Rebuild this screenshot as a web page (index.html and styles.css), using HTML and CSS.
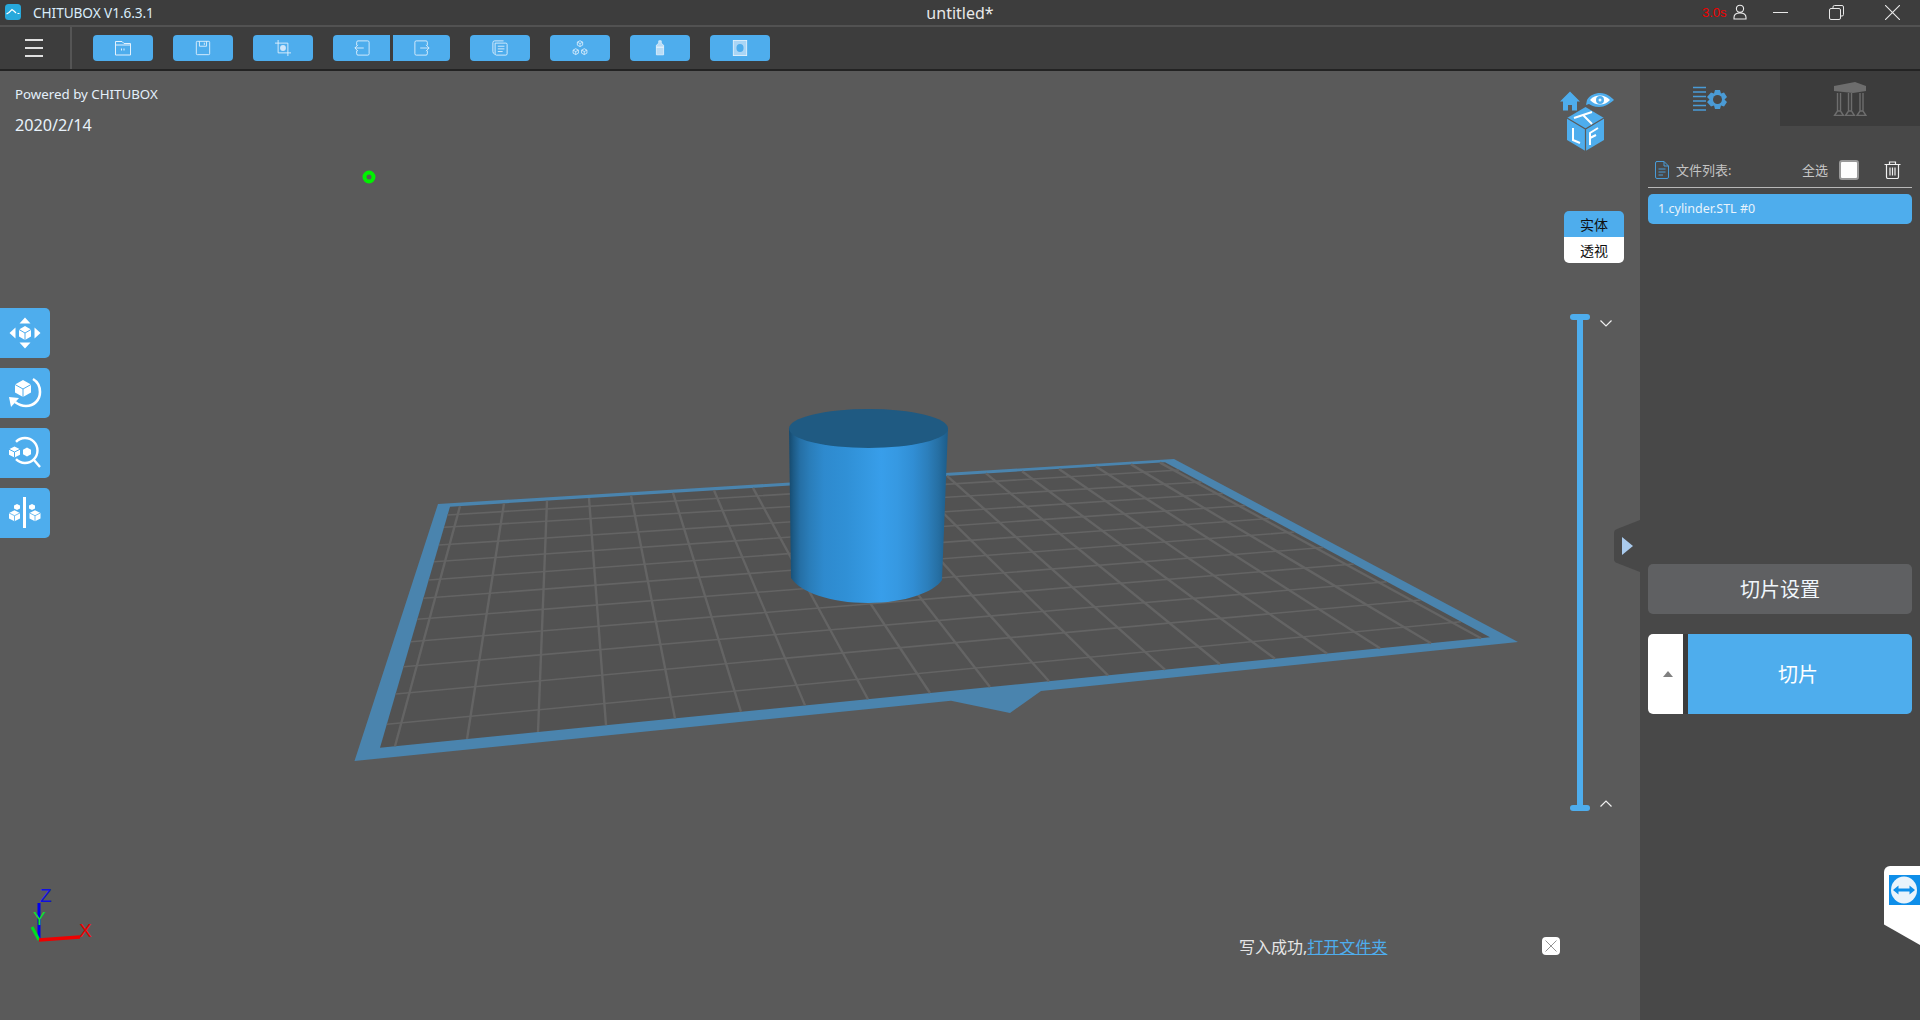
FILE: index.html
```html
<!DOCTYPE html>
<html lang="zh">
<head>
<meta charset="utf-8">
<title>CHITUBOX</title>
<link rel="stylesheet" href="styles.css">
</head>
<body>
<div class="app">
  <header class="titlebar">
    <div class="title-left">
      <svg class="logo" viewBox="0 0 16 16"><rect width="16" height="16" rx="3.5" fill="#27a9dc"/><path d="M1.5 10 L4 8.5 L7 5.5 L9.5 7.5 L11 9 M12.5 9.5 L14.5 9.5" fill="none" stroke="#fff" stroke-width="1.2"/></svg>
      <span class="app-name">CHITUBOX V1.6.3.1</span>
    </div>
    <div class="doc-name">untitled*</div>
    <div class="title-right">
      <span class="timer">3.0s</span>
      <svg class="user" viewBox="0 0 14 16"><circle cx="7" cy="4.8" r="3.6" fill="none" stroke="#eee" stroke-width="1.1"/><path d="M1 15 V13.5 C1 10.5 3.5 9 7 9 C10.5 9 13 10.5 13 13.5 V15 Z" fill="none" stroke="#eee" stroke-width="1.1"/></svg>
      <svg class="min" viewBox="0 0 15 15"><path d="M0 7.5H15" stroke="#e8e8e8" stroke-width="1"/></svg>
      <svg class="restore" viewBox="0 0 15 15"><path d="M4 3 V2 Q4 .5 5.5 .5 H13 Q14.5 .5 14.5 2 V9.5 Q14.5 11 13 11 H12" fill="none" stroke="#e8e8e8"/><rect x=".5" y="3.5" width="11" height="11" rx="1.5" fill="none" stroke="#e8e8e8"/></svg>
      <svg class="close" viewBox="0 0 15 15"><path d="M0 0L15 15M15 0L0 15" stroke="#e8e8e8" stroke-width="1.1"/></svg>
    </div>
  </header>

  <nav class="toolbar">
    <div class="menu"><i></i><i></i><i></i></div>
    <div class="tools">
      <button class="tool"><svg viewBox="0 0 18 16"><path d="M1.5 15V1.5H8L10 3.5H16.5V15ZM1.5 5H16.5M7.5 8.5V10.5M10 8.5V10.5" class="ic"/></svg></button>
      <button class="tool"><svg viewBox="0 0 18 18"><path d="M2.5 1.5H15.5Q16.5 1.5 16.5 2.5V15.5Q16.5 16.5 15.5 16.5H2.5Q1.5 16.5 1.5 15.5V2.5Q1.5 1.5 2.5 1.5ZM5 1.5V7H13V1.5M10.5 3V5.5" class="ic"/></svg></button>
      <button class="tool"><svg viewBox="0 0 18 18"><path d="M3.5 0V14.5H18M0 3.5H14.5V18" class="ic"/><circle cx="9" cy="9" r="3.3" fill="#cfe6fa"/></svg></button>
      <div class="tool-pair">
        <button class="tool half left"><svg viewBox="0 0 18 18"><path d="M3 6V2.5Q3 1 4.5 1H15.5Q17 1 17 2.5V15.5Q17 17 15.5 17H4.5Q3 17 3 15.5V12M1 9H11M1 9L4.5 5.5M1 9L4.5 12.5" class="ic"/></svg></button>
        <button class="tool half right"><svg viewBox="0 0 18 18"><path d="M15 6V2.5Q15 1 13.5 1H2.5Q1 1 1 2.5V15.5Q1 17 2.5 17H13.5Q15 17 15 15.5V12M7 9H17M17 9L13.5 5.5M17 9L13.5 12.5" class="ic"/></svg></button>
      </div>
      <button class="tool"><svg viewBox="0 0 18 18"><path d="M3 16Q1 15 1 13V3Q1 1 3 1H13M3.5 3.5H15.5Q17 3.5 17 5V15.5Q17 17 15.5 17H5Q3.5 17 3.5 15.5ZM6.5 7H14M6.5 10H14M6.5 13H12" class="ic"/></svg></button>
      <button class="tool"><svg viewBox="0 0 18 18"><path d="M9 .8L12 2.4V5.8L9 7.4L6 5.8V2.4ZM6 2.4L9 4L12 2.4M9 4V7.4M4.2 9.8L7.2 11.4V14.8L4.2 16.4L1.2 14.8V11.4ZM1.2 11.4L4.2 13L7.2 11.4M4.2 13V16.4M13.8 9.8L16.8 11.4V14.8L13.8 16.4L10.8 14.8V11.4ZM10.8 11.4L13.8 13L16.8 11.4M13.8 13V16.4" class="ic thin"/></svg></button>
      <button class="tool"><svg viewBox="0 0 12 20"><path d="M4.5 1H7.5V4L10.5 6.5V18.5H1.5V6.5L4.5 4Z" fill="#b9dcf6" stroke="#e6f3fc" stroke-width="1"/><path d="M1.5 9H10.5" stroke="#fff" stroke-width="1"/></svg></button>
      <button class="tool"><svg viewBox="0 0 16 18"><rect x=".5" y=".5" width="15" height="17" fill="#a9d5f5" stroke="#e3f1fb"/><ellipse cx="8" cy="9" rx="4" ry="4.4" fill="#4eaded"/></svg></button>
    </div>
  </nav>

  <div class="workspace">
    <main class="viewport">
      <svg class="scene" viewBox="0 0 1640 949" preserveAspectRatio="none" aria-hidden="true">
        <defs>
          <linearGradient id="cyl" x1="0" x2="1" y1="0" y2="0">
            <stop offset="0" stop-color="#164a6e"/>
            <stop offset=".03" stop-color="#1d5c88"/>
            <stop offset=".07" stop-color="#256fa5"/>
            <stop offset=".13" stop-color="#2a7db9"/>
            <stop offset=".22" stop-color="#2e8ace"/>
            <stop offset=".36" stop-color="#3090d6"/>
            <stop offset=".5" stop-color="#3599e2"/>
            <stop offset=".58" stop-color="#389eea"/>
            <stop offset=".68" stop-color="#3699e2"/>
            <stop offset=".78" stop-color="#318ed4"/>
            <stop offset=".87" stop-color="#2c7fbc"/>
            <stop offset=".94" stop-color="#266fa3"/>
            <stop offset="1" stop-color="#1c5c89"/>
          </linearGradient>
        </defs>
        <g transform="translate(0 -71)">
          <path class="plate-rim" d="M438 504L1174 459L1518 642L1041 691L1010 713L951 700.7L354.5 761Z"/>
          <path class="plate" d="M450 506.7L1165 462.3L1490 637.3L380 747.7Z"/>
          <path class="grid-h" d="M447.6 515L1179.3 470M444 527.3L1201.6 482M438.9 545L1223 493.5M434 561.7L1245 505.5M428.7 580L1269.4 518.5M423.4 598.3L1294.4 532M417.3 619.3L1323.2 547.5M410.8 641.7L1353.9 564M403.5 666.7L1386.8 581.7M395.6 694L1420.7 600M386.8 724.3L1461 621.7"/>
          <path class="grid-v" d="M460 506.1L395 746.2M504 503.4L467 739M547 500.7L538 732M589 498L606 725.2M631 495.5L675 718.4M673 492.9L741 711.8M714 490.3L805 705.4M753 487.9L868 699.2M792 485.5L930 693M831 483L990 687M869 480.7L1049 681.2M908 478.3L1108 675.3M947 475.8L1165 669.6M986 473.4L1220 664.2M1022 471.2L1275 658.7M1059 468.9L1327 653.5M1096 466.6L1380 648.2M1131 464.4L1431 643.2M1160 462.6L1481 638.2"/>
          <path class="cyl-side" d="M789 428L791 578C800 592 830 603 868 603C905 603 934 592 942 580L948 428Z"/>
          <ellipse class="cyl-top" cx="868.5" cy="428.5" rx="79.5" ry="19.5"/>
          <circle class="pivot" cx="369" cy="177" r="4.5"/>
          <g class="axes">
            <path class="ax-z" d="M39 940V903"/>
            <path class="ax-y" d="M39 940L32 927"/>
            <path class="ax-x" d="M39 940L80 937"/>
            <text class="ax-t z" x="40" y="902">Z</text>
            <text class="ax-t y" x="33" y="925">Y</text>
            <text class="ax-t x" x="79" y="937">X</text>
          </g>
        </g>
      </svg>

      <div class="info">
        <p class="powered">Powered by CHITUBOX</p>
        <p class="date">2020/2/14</p>
      </div>

      <div class="side-tools">
        <button class="side-btn"><svg viewBox="0 0 34 34"><path d="M17 1.5L22.500 7.500H11.500ZM17 32.500L22.500 26.500H11.500ZM1.500 17L7.500 11.500V22.500ZM32.500 17L26.500 11.500V22.500Z" fill="#fff"/><path d="M17 10L23 13.500V20.500L17 24L11 20.500V13.500Z" fill="#fff"/><path d="M11 13.500L17 17L23 13.500M17 17V24" stroke="#4eaded" fill="none"/></svg></button>
        <button class="side-btn"><svg viewBox="0 0 34 34"><path d="M25 3C30 6 32 11 32 16C32 24 26 30 18 30C14 30 11 29 7 26" fill="none" stroke="#fff" stroke-width="2.600"/><path d="M1 21L11 22L3 31Z" fill="#fff"/><path d="M15 4L23 8.500V16.500L15 21L7 16.500V8.500Z" fill="#fff"/><path d="M7 8.500L15 13L23 8.500M15 13V21" stroke="#4eaded" fill="none"/></svg></button>
        <button class="side-btn"><svg viewBox="0 0 34 34"><path d="M8 5.800A12.500 12.500 0 1 1 8 23.200M26 24L32 31" fill="none" stroke="#fff" stroke-width="2.400"/><path d="M6.500 10.500L12 13.250V18.750L6.500 21.500L1 18.750V13.250Z" fill="#fff"/><path d="M1 13.250L6.500 16L12 13.250M6.500 16V21.500" stroke="#4eaded" fill="none"/><path d="M19 11.500L23 13.750V18.250L19 20.500L15 18.250V13.750Z" fill="#fff"/></svg></button>
        <button class="side-btn"><svg viewBox="0 0 34 34"><rect x="15" y="1" width="3" height="31" fill="#fff"/><path d="M9 8L12 9.500V12.500L9 14L6 12.500V9.500ZM6.500 14.200L12 16.950V22.450L6.500 25.200L1 22.450V16.950ZM24 8L27 9.500V12.500L24 14L21 12.500V9.500ZM27 14.200L32.500 16.950V22.450L27 25.200L21.500 22.450V16.950Z" fill="#fff"/><path d="M1 16.950L6.500 19.700L12 16.950M6.500 19.700V25.200M21.500 16.950L27 19.700L32.500 16.950M27 19.700V25.200" stroke="#4eaded" stroke-width=".8" fill="none"/></svg></button>
      </div>

      <div class="navcube">
        <svg viewBox="0 0 60 70" aria-hidden="true">
          <path d="M11 .5L21 10.500H18V19.500H13V14H9V19.500H4V10.500H1Z" fill="#4eaded"/>
          <path d="M28 9C31 4 36 2 41 2C48 2 52 6 55 9C50 13 46 16 40 16C35 16 32 14 30 13L27 14Z" fill="#4eaded"/>
          <path d="M31 9C34 5.500 37 4.500 41 4.500C45 4.500 48 6 51 9C48 12 45 13.500 41 13.500C37 13.500 34 12 31 9Z" fill="#fff"/>
          <circle cx="41" cy="9" r="4" fill="#4eaded"/><circle cx="41" cy="9" r="1.500" fill="#e8f4fd"/>
          <path d="M26.500 16L45 27V49L26.500 60L8 49V27Z" fill="#4eaded"/>
          <path d="M8 27L26.500 38L45 27M26.500 38V60" stroke="#5a5a5a" stroke-width="1.200" fill="none"/>
          <path d="M15 27L33 21M24 24L33 33" stroke="#fff" stroke-width="2" fill="none"/>
          <path d="M14 37V49L21 52" stroke="#fff" stroke-width="2" fill="none"/>
          <path d="M31 54V42L39 37M31 47L37 44" stroke="#fff" stroke-width="2" fill="none"/>
        </svg>
      </div>

      <div class="view-mode">
        <button class="mode solid">实体</button>
        <button class="mode xray">透视</button>
      </div>

      <div class="layer-slider">
        <i class="cap"></i>
        <i class="track"></i>
        <i class="cap"></i>
        <svg class="chev up" viewBox="0 0 12 7"><path d="M.5 .5L6 6L11.500 .5" fill="none" stroke="#f0f0f0" stroke-width="1.200"/></svg>
        <svg class="chev down" viewBox="0 0 12 7"><path d="M.5 6.500L6 1L11.500 6.500" fill="none" stroke="#f0f0f0" stroke-width="1.200"/></svg>
      </div>

      <div class="notice">
        <span>写入成功,</span><a class="notice-link">打开文件夹</a>
      </div>
      <button class="notice-close"><svg viewBox="0 0 12 12"><path d="M.5 .5L11.500 11.500M11.500 .5L.5 11.500" stroke="#888" stroke-width=".9"/></svg></button>
    </main>

    <aside class="panel">
      <div class="collapse"><svg viewBox="0 0 26 52"><path d="M26 0V52L3 43Q0 42 0 39V13Q0 10 3 9Z" fill="#484848"/><path d="M8 17L19 26L8 35Z" fill="#aacbee"/></svg></div>
      <div class="tabs">
        <div class="tab active"><svg viewBox="0 0 34 26"><path d="M0 1.500H13M0 6H13M0 10.500H13M0 15H13M0 19.500H13M0 24H13" stroke="#4a9bd6" stroke-width="1.600"/><path d="M22 4H27L28 7.500L31 6.500L34 11L31.500 13.500L34 16L31 20.500L28 19.500L27 23H22L21 19.500L18 20.500L14 16L16.500 13.500L14 11L18 6.500L21 7.500Z" fill="#4a9bd6"/><circle cx="24.500" cy="13.500" r="4.500" fill="#484848"/></svg></div>
        <div class="tab"><svg viewBox="0 0 32 34"><path d="M0 4L21 0L32 4V9L19 11L0 9Z" fill="#6d6d6d"/><path d="M3.500 11V29M6.500 11V29M14.500 11V29M17.500 11V29M26 11V29M29 11V29M.5 33.500L3.500 29H6.500L9.500 33.500ZM11.500 33.500L14.500 29H17.500L20.500 33.500ZM23 33.500L26 29H29L32 33.500Z" stroke="#6d6d6d" stroke-width="1.400" fill="none"/></svg></div>
      </div>

      <div class="file-head">
        <svg class="doc" viewBox="0 0 14 18"><path d="M1.500 .5H9L13.500 5V16Q13.500 17.500 12 17.500H2Q.5 17.500 .5 16V2Q.5 .5 2 .5ZM9 .5V5H13.500M3.500 8H10.500M3.500 11H10.500M3.500 14H8" fill="none" stroke="#4a9bd6" stroke-width="1"/></svg>
        <span class="head-label">文件列表:</span>
        <span class="select-all">全选</span>
        <span class="check"></span>
        <svg class="trash" viewBox="0 0 17 18"><path d="M.5 3.500H16.500M5.500 3.500V1H11.500V3.500M2.500 3.500V16Q2.500 17.500 4 17.500H13Q14.500 17.500 14.500 16V3.500M6 6.500V14.500M8.500 6.500V14.500M11 6.500V14.500" fill="none" stroke="#f0f0f0" stroke-width="1.200"/></svg>
      </div>
      <ul class="file-list">
        <li class="file-item">1.cylinder.STL #0</li>
      </ul>

      <div class="actions">
        <button class="settings-btn">切片设置</button>
        <div class="slice-row">
          <button class="slice-more"><svg viewBox="0 0 10 6"><path d="M5 0L10 6H0Z" fill="#808080"/></svg></button>
          <button class="slice-btn">切片</button>
        </div>
      </div>

      <div class="teamviewer">
        <div class="tv-icon"><svg viewBox="0 0 31 30"><rect width="31" height="30" fill="#0e8ee9"/><ellipse cx="15" cy="15" rx="13" ry="13.500" fill="#e9f3fb"/><path d="M4 15L9.500 10.500V13.500H20.500V10.500L26 15L20.500 19.500V16.500H9.500V19.500Z" fill="#0e8ee9"/></svg></div>
      </div>
    </aside>
  </div>
</div>
</body>
</html>
```

FILE: styles.css
```css
* { box-sizing: border-box; }
html, body { margin: 0; height: 100%; overflow: hidden; }
body { font-family: "Noto Sans", "Noto Sans CJK SC", sans-serif; background: #5a5a5a; }
button { border: 0; padding: 0; margin: 0; font-family: inherit; cursor: default; }
p { margin: 0; }

.app { display: flex; flex-direction: column; height: 1020px; width: 1920px; }

/* title bar */
.titlebar { height: 27px; flex: none; display: flex; align-items: center; background: #3d3d3d; border-bottom: 2px solid #525252; position: relative; padding-bottom: 1px; }
.title-left { display: flex; align-items: center; padding-left: 5px; }
.logo { width: 16px; height: 16px; }
.app-name { margin-left: 12px; color: #d9ecfa; font-size: 13.7px; letter-spacing: -.1px; }
.doc-name { position: absolute; left: 0; right: 0; top: 1px; text-align: center; color: #e8e8e8; font-size: 16px; line-height: 24px; }
.title-right { margin-left: auto; display: flex; align-items: center; }
.timer { color: #f00000; font-family: "Liberation Sans", sans-serif; font-size: 13px; width: 31px; margin-top: 1px; }
.user { width: 14px; height: 16px; }
.min { width: 15px; height: 15px; margin-left: 26px; }
.restore { width: 15px; height: 15px; margin-left: 41px; }
.close { width: 15px; height: 15px; margin-left: 41px; margin-right: 20px; }

/* tool bar */
.toolbar { height: 44px; flex: none; display: flex; background: #3d3d3d; border-bottom: 2px solid #232323; }
.menu { width: 72px; display: flex; flex-direction: column; justify-content: center; gap: 6px; padding: 0 27px 0 25px; border-right: 2px solid #555; }
.menu i { display: block; height: 2px; background: #e0e0e0; }
.tools { display: flex; gap: 20px; padding: 8px 0 0 21px; }
.tool { width: 60px; height: 26px; border-radius: 4px; background: #4eaded; display: flex; align-items: center; justify-content: center; }
.tool svg { height: 16px; width: 18px; }
.tool-pair { display: flex; gap: 3px; }
.tool.half { width: 57px; }
.tool.left { border-radius: 4px 0 0 4px; }
.tool.right { border-radius: 0 4px 4px 0; }
.ic { fill: none; stroke: #e2f1fd; stroke-width: 1; }
.ic.thin { stroke-width: .9; }

/* workspace */
.workspace { flex: 1; display: flex; min-height: 0; }
.viewport { flex: 1; position: relative; background: #5a5a5a; overflow: hidden; }
.scene { position: absolute; inset: 0; width: 100%; height: 100%; }
.plate-rim { fill: #4a84ae; }
.plate { fill: #525252; }
.grid-h { fill: none; stroke: #646464; stroke-width: 1.6; }
.grid-v { fill: none; stroke: #646464; stroke-width: 2.4; }
.cyl-side { fill: url(#cyl); }
.cyl-top { fill: #1f5a82; }
.pivot { fill: none; stroke: #00f000; stroke-width: 4; }
.ax-z { stroke: #0000ee; stroke-width: 3; }
.ax-y { stroke: #00e020; stroke-width: 3; }
.ax-x { stroke: #ee0000; stroke-width: 3.5; }
.ax-t { font-family: "Liberation Sans", sans-serif; font-size: 19px; }
.ax-t.z { fill: #1010e0; }
.ax-t.y { fill: #10e030; }
.ax-t.x { fill: #ee0000; }

.info { position: absolute; left: 15px; top: 13px; }
.powered { color: #e4f0fa; font-size: 13.3px; line-height: 20px; }
.date { color: #e8f2fa; font-size: 16.2px; line-height: 22px; margin-top: 10px; }

.side-tools { position: absolute; left: 0; top: 237px; display: flex; flex-direction: column; gap: 10px; }
.side-btn { width: 50px; height: 50px; background: #4eaded; border-radius: 0 5px 5px 0; display: flex; align-items: center; justify-content: center; }
.side-btn svg { width: 34px; height: 34px; }

.navcube { position: absolute; left: 1559px; top: 20px; width: 60px; height: 70px; }
.navcube svg { width: 60px; height: 70px; display: block; }

.view-mode { position: absolute; left: 1564px; top: 140px; display: flex; flex-direction: column; }
.mode { width: 60px; height: 26px; padding-bottom: 1px; font-size: 14px; color: #101010; }
.mode.solid { background: #4eaded; border-radius: 5px 5px 0 0; }
.mode.xray { background: #fff; border-radius: 0 0 5px 5px; }

.layer-slider { position: absolute; left: 1570px; top: 243px; width: 42px; height: 497px; display: flex; flex-direction: column; align-items: flex-start; }
.cap { display: block; width: 20px; height: 6px; background: #4eaded; border-radius: 3px; flex: none; }
.track { display: block; width: 6px; flex: 1; background: #4eaded; margin-left: 7px; margin-top: -1px; margin-bottom: -1px; }
.chev { position: absolute; width: 12px; height: 7px; left: 30px; }
.chev.up { top: 6px; }
.chev.down { bottom: 4px; }

.notice { position: absolute; left: 1239px; top: 864px; font-size: 16px; line-height: 24px; color: #e6e6e6; white-space: nowrap; }
.notice-link { color: #4eaded; text-decoration: underline; }
.notice-close { position: absolute; left: 1542px; top: 866px; width: 18px; height: 18px; background: #fff; border-radius: 4px; display: flex; align-items: center; justify-content: center; }
.notice-close svg { width: 12px; height: 12px; }

/* side panel */
.panel { width: 280px; flex: none; position: relative; background: #484848; display: flex; flex-direction: column; }
.collapse { position: absolute; left: -26px; top: 449px; width: 26px; height: 52px; }
.collapse svg { width: 26px; height: 52px; display: block; }
.tabs { display: flex; height: 55px; flex: none; }
.tab { flex: 1; display: flex; align-items: center; justify-content: center; background: #3c3c3c; }
.tab.active { background: #484848; }
.tab svg { width: 34px; height: 34px; }

.file-head { display: flex; align-items: center; height: 62px; margin: 0 8px; padding: 26px 11px 0 7px; border-bottom: 1px solid #b8b8b8; }
.doc { width: 14px; height: 18px; }
.head-label { margin-left: 7px; font-size: 13px; color: #c4c4c4; }
.select-all { margin-left: auto; font-size: 13px; color: #c8c8c8; }
.check { width: 20px; height: 20px; margin-left: 11px; background: #fff; border: 2px solid #9a9a9a; border-radius: 3px; }
.trash { width: 17px; height: 18px; margin-left: 25px; }

.file-list { list-style: none; margin: 6px 8px 0; padding: 0; height: 345px; flex: none; }
.file-item { height: 30px; line-height: 30px; padding-left: 10px; background: #4eaded; border-radius: 5px; color: #e8f3fc; font-size: 12.5px; }

.actions { margin: 25px 8px 0; display: flex; flex-direction: column; gap: 20px; }
.settings-btn { height: 50px; padding-bottom: 2px; background: #5f6062; color: #f0f6fb; font-size: 20px; border-radius: 5px; }
.slice-row { display: flex; height: 80px; gap: 5px; background: #3c3c3c; border-radius: 5px; }
.slice-more { width: 35px; padding-left: 5px; background: #fff; border-radius: 5px 0 0 5px; display: flex; align-items: center; justify-content: center; }
.slice-more svg { width: 10px; height: 6px; }
.slice-btn { flex: 1; padding: 0 4px 2px 0; background: #4eaded; color: #fff; font-size: 20px; border-radius: 0 5px 5px 0; }

.teamviewer { position: absolute; right: 0; top: 795px; width: 36px; height: 79px; background: #fff; border-radius: 6px 0 0 0; clip-path: polygon(0 0, 100% 0, 100% 100%, 0 74%); padding: 9px 0 0 5px; }
.tv-icon svg { width: 31px; height: 30px; display: block; }
```
